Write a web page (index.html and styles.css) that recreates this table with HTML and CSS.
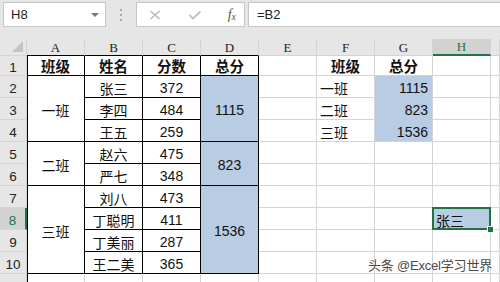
FILE: index.html
```html
<!DOCTYPE html>
<html>
<head>
<meta charset="utf-8">
<title>成绩汇总</title>
<link rel="stylesheet" href="styles.css">
</head>
<body>

<div class="toolbar">
    <div class="namebox">
        <span>H8</span>
        <span class="caret"></span>
    </div>
    <div class="grip">
        <svg width="4" height="12" viewBox="0 0 4 12"><rect x="1" y="0" width="2" height="2" fill="#a8a8a8"/><rect x="1" y="5" width="2" height="2" fill="#a8a8a8"/><rect x="1" y="10" width="2" height="2" fill="#a8a8a8"/></svg>
    </div>
    <div class="fxbox">
        <svg class="ico" width="14" height="10" viewBox="0 0 14 10"><path d="M2.5 1 L11.5 9 M11.5 1 L2.5 9" stroke="#b4b4b4" stroke-width="1.3" fill="none"/></svg>
        <svg class="ico" width="14" height="10" viewBox="0 0 14 10"><path d="M1.5 5 L5 8.5 L12.5 1.5" stroke="#c2c2c2" stroke-width="1.8" fill="none"/></svg>
        <span class="fx">f<sub>x</sub></span>
    </div>
    <div class="formula">=B2</div>
</div>

<div class="sheet">
    <!-- column headers -->
    <div class="corner"></div>
    <div class="ch edge">A</div>
    <div class="ch edge">B</div>
    <div class="ch edge">C</div>
    <div class="ch edge">D</div>
    <div class="ch">E</div>
    <div class="ch">F</div>
    <div class="ch">G</div>
    <div class="ch on">H</div>
    <div class="ch"></div>

    <!-- row 1 -->
    <div class="rh r1">1</div>
    <div class="c t a b r1">班级</div>
    <div class="c t b r1">姓名</div>
    <div class="c t b r1">分数</div>
    <div class="c t b r1">总分</div>
    <div class="c r1"></div>
    <div class="c b r1">班级</div>
    <div class="c b r1">总分</div>
    <div class="c r1"></div>
    <div class="c r1"></div>

    <!-- row 2 -->
    <div class="rh">2</div>
    <div class="c t a span3">一班</div>
    <div class="c t">张三</div>
    <div class="c t">372</div>
    <div class="c t fill span3">1115</div>
    <div class="c"></div>
    <div class="c left">一班</div>
    <div class="c right fill mid">1115</div>
    <div class="c"></div>
    <div class="c"></div>

    <!-- row 3 -->
    <div class="rh">3</div>
    <div class="c t">李四</div>
    <div class="c t">484</div>
    <div class="c"></div>
    <div class="c left">二班</div>
    <div class="c right fill mid">823</div>
    <div class="c"></div>
    <div class="c"></div>

    <!-- row 4 -->
    <div class="rh">4</div>
    <div class="c t">王五</div>
    <div class="c t">259</div>
    <div class="c"></div>
    <div class="c left">三班</div>
    <div class="c right fill">1536</div>
    <div class="c"></div>
    <div class="c"></div>

    <!-- row 5 -->
    <div class="rh">5</div>
    <div class="c t a span2">二班</div>
    <div class="c t">赵六</div>
    <div class="c t">475</div>
    <div class="c t fill span2">823</div>
    <div class="c"></div>
    <div class="c"></div>
    <div class="c"></div>
    <div class="c"></div>
    <div class="c"></div>

    <!-- row 6 -->
    <div class="rh">6</div>
    <div class="c t">严七</div>
    <div class="c t">348</div>
    <div class="c"></div>
    <div class="c"></div>
    <div class="c"></div>
    <div class="c"></div>
    <div class="c"></div>

    <!-- row 7 -->
    <div class="rh">7</div>
    <div class="c t a span4">三班</div>
    <div class="c t">刘八</div>
    <div class="c t">473</div>
    <div class="c t fill span4">1536</div>
    <div class="c"></div>
    <div class="c"></div>
    <div class="c"></div>
    <div class="c"></div>
    <div class="c"></div>

    <!-- row 8 -->
    <div class="rh on">8</div>
    <div class="c t">丁聪明</div>
    <div class="c t">411</div>
    <div class="c"></div>
    <div class="c"></div>
    <div class="c"></div>
    <div class="c left fill active">张三</div>
    <div class="c"></div>

    <!-- row 9 -->
    <div class="rh">9</div>
    <div class="c t">丁美丽</div>
    <div class="c t">287</div>
    <div class="c"></div>
    <div class="c"></div>
    <div class="c"></div>
    <div class="c"></div>
    <div class="c"></div>

    <!-- row 10 -->
    <div class="rh">10</div>
    <div class="c t">王二美</div>
    <div class="c t">365</div>
    <div class="c"></div>
    <div class="c"></div>
    <div class="c"></div>
    <div class="c"></div>
    <div class="c"></div>

    <!-- row 11, only its top shows -->
    <div class="rh last">11</div>
    <div class="c a"></div>
    <div class="c"></div>
    <div class="c"></div>
    <div class="c"></div>
    <div class="c"></div>
    <div class="c"></div>
    <div class="c"></div>
    <div class="c"></div>
    <div class="c"></div>
</div>

<div class="mark">头条 @Excel学习世界</div>

</body>
</html>
```

FILE: styles.css
```css
body {
    margin: 0;
    width: 500px;
    height: 282px;
    overflow: hidden;
    position: relative;
    background: #fff;
    font-family: "Liberation Sans", "Noto Sans CJK SC", sans-serif;
}

/* name box + formula bar */
.toolbar {
    height: 39px;
    box-sizing: border-box;
    padding: 2px 0 0 3px;
    background: #e6e6e6;
    display: flex;
    align-items: flex-start;
}

.namebox, .fxbox, .formula {
    height: 25px;
    box-sizing: border-box;
    background: #fff;
    border: 1px solid #c6c6c6;
    display: flex;
    align-items: center;
}

.namebox {
    width: 103px;
    padding: 0 6px 0 7px;
    justify-content: space-between;
    font-size: 13px;
    color: #222;
}

.caret {
    width: 0;
    height: 0;
    border-left: 4px solid transparent;
    border-right: 4px solid transparent;
    border-top: 4px solid #7a7a7a;
}

.grip {
    width: 30px;
    height: 25px;
    display: flex;
    align-items: center;
    justify-content: center;
}

.fxbox {
    width: 109px;
    padding: 0 8px 0 11px;
    justify-content: space-between;
}

.fx {
    font-family: "Liberation Serif", serif;
    font-style: italic;
    font-size: 14px;
    color: #555;
    line-height: 1;
}

.fx sub {
    font-size: 10px;
    vertical-align: -1px;
}

.formula {
    flex: 1;
    margin-left: 3px;
    border-right: 0;
    padding-left: 8px;
    font-size: 13px;
    color: #222;
}

/* worksheet grid */
.sheet {
    display: grid;
    grid-template-columns: 27px repeat(8, 58px) 1fr;
    grid-template-rows: 17px 20px repeat(10, 22px);
}

.sheet > div {
    box-sizing: border-box;
    border-right: 1px solid #d4d4d4;
    border-bottom: 1px solid #d4d4d4;
    display: flex;
    align-items: center;
    justify-content: center;
    white-space: nowrap;
}

.corner {
    background: #e6e6e6;
    position: relative;
}

.corner::after {
    content: "";
    position: absolute;
    right: 3px;
    bottom: 3px;
    width: 11px;
    height: 11px;
    background: #c4c4c4;
    clip-path: polygon(100% 0, 100% 100%, 0 100%);
}

.ch {
    background: #e6e6e6;
    font-family: "Liberation Serif", serif;
    font-size: 13px;
    color: #222;
    padding-top: 1px;
}

.sheet > .ch.edge {
    border-bottom-color: #000;
}

.rh {
    background: #e6e6e6;
    font-size: 13.5px;
    color: #222;
    padding-top: 4px;
}

.sheet > .rh.last {
    align-items: flex-start;
    padding-top: 10px;
}

.sheet > .ch.on {
    background: #d2d2d2;
    color: #217346;
    border-bottom: 2px solid #217346;
}

.sheet > .rh.on {
    background: #d2d2d2;
    color: #217346;
    border-right: 2px solid #217346;
}

.c {
    font-size: 14px;
    color: #111;
    padding-top: 2px;
}

.c.r1 {
    padding-top: 0;
}

.sheet > .t {
    border-right-color: #000;
    border-bottom-color: #000;
}

.a {
    box-shadow: inset 1px 0 #000;
}

.b {
    font-weight: bold;
    font-size: 14.5px;
}

.sheet > .left {
    justify-content: flex-start;
    padding-left: 3px;
}

.sheet > .right {
    justify-content: flex-end;
    padding-right: 4px;
}

.span2 { grid-row: span 2; }
.span3 { grid-row: span 3; }
.span4 { grid-row: span 4; }

.fill {
    background: #b8cce4;
}

.sheet > .fill.mid {
    border-bottom-color: #b8cce4;
}

/* selected cell outline with fill handle */
.active {
    position: relative;
    z-index: 1;
}

.active::before {
    content: "";
    position: absolute;
    top: -1px;
    left: -1px;
    right: -1px;
    bottom: -1px;
    border: 2px solid #217346;
}

.active::after {
    content: "";
    position: absolute;
    right: -4px;
    bottom: -4px;
    width: 5px;
    height: 5px;
    background: #217346;
    border: 1px solid #fff;
}

.mark {
    position: absolute;
    right: 8px;
    bottom: 8px;
    font-size: 13px;
    color: #4a4a4a;
    text-shadow: 0 0 2px #fff, 0 0 2px #fff;
    letter-spacing: -0.2px;
}
```
